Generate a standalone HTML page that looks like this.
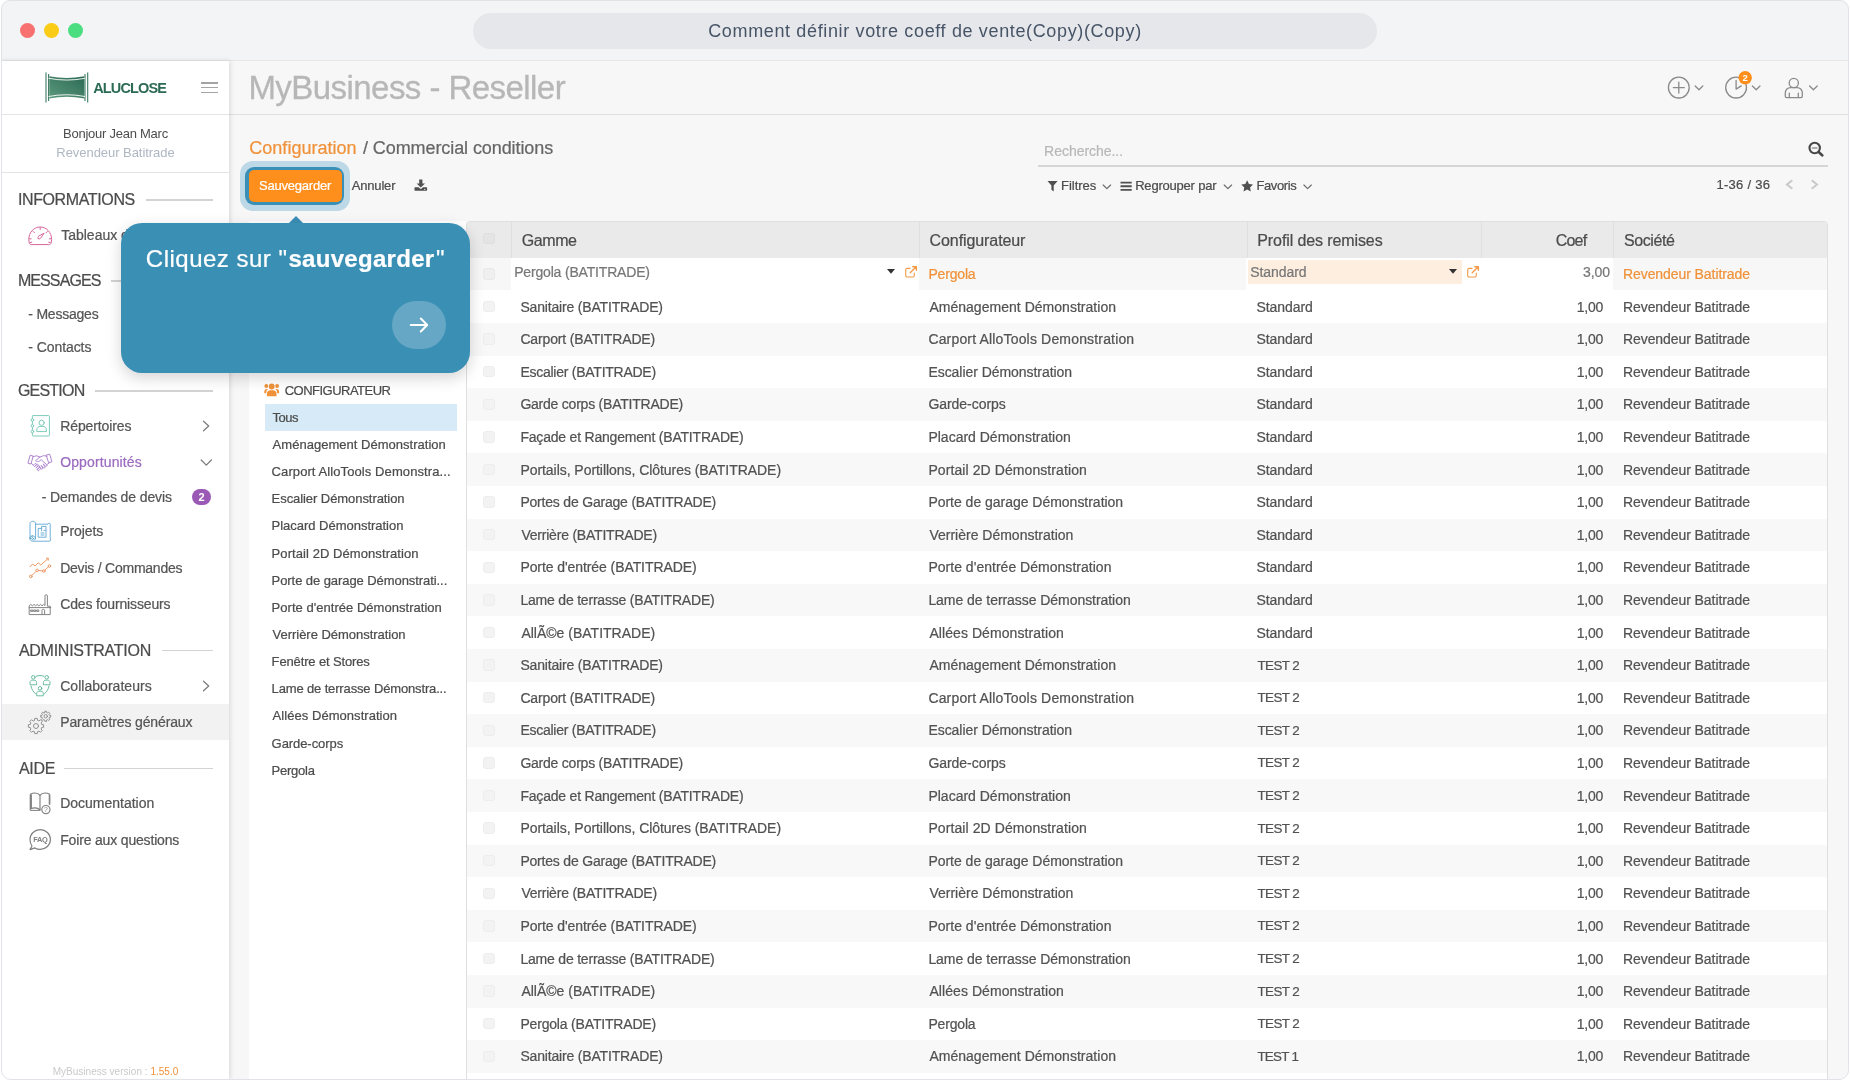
<!DOCTYPE html>
<html lang="fr">
<head>
<meta charset="utf-8">
<title>Comment définir votre coeff de vente(Copy)(Copy)</title>
<style>
*{box-sizing:border-box;margin:0;padding:0}
html,body{width:1850px;height:1080px;overflow:hidden;background:#fff;font-family:"Liberation Sans",sans-serif;color:#4c4c4c}
#win{position:absolute;left:0;top:0;width:1850px;height:1080px;overflow:hidden;background:#f7f7f7;will-change:transform}
#frame{position:absolute;left:1px;top:0;width:1848px;height:1080px;border:1px solid #e2e3e8;border-radius:9px 9px 10px 10px;box-shadow:0 0 0 12px #fff;z-index:50;pointer-events:none}
#tb{position:absolute;left:0;top:0;width:1850px;height:61px;background:#f3f4f6;border-bottom:1px solid #e5e7eb}
.tl{position:absolute;top:23px;width:15px;height:15px;border-radius:50%}
#pill{position:absolute;left:473px;top:13px;width:904px;height:36px;border-radius:18px;background:#e5e7eb;text-align:center;font-size:18px;line-height:36.600px;color:#475467;letter-spacing:.64px;white-space:nowrap}
/* sidebar */
#sb{position:absolute;left:0;top:61px;width:229px;height:1019px;background:#fff;box-shadow:1px 0 5px rgba(0,0,0,.13);z-index:3}
#sbh{position:absolute;left:0;top:0;width:229px;height:54px;border-bottom:1px solid #e4e4e4}
#usr{position:absolute;left:0;top:54px;width:229px;height:58px;border-bottom:1px solid #e4e4e4;text-align:center;font-size:13px}
.sec{position:absolute;left:18px;font-size:16px;letter-spacing:-.35px;color:#4c4c4c;line-height:20px;white-space:nowrap}
.secl{position:absolute;height:1.500px;background:#d3d3d3}
.mi{position:absolute;left:60px;font-size:14px;line-height:20px;white-space:nowrap;color:#555;letter-spacing:-.12px}
.sub{position:absolute;font-size:14px;line-height:20px;white-space:nowrap;color:#555;letter-spacing:-.12px}
.ico{position:absolute;left:27px;width:26px;height:26px;overflow:visible}
.chev{position:absolute;overflow:visible}
/* main header */
#mh{position:absolute;left:229px;top:61px;width:1621px;height:54px;background:#f7f7f7;border-bottom:1px solid #e0e0e0}
#mh h1{position:absolute;left:21px;top:7px;font-size:32px;font-weight:400;color:#b1b1b1;line-height:40px;letter-spacing:-.12px;white-space:nowrap}
/* control panel */
#bc{position:absolute;left:249px;top:136px;font-size:18px;line-height:24px;white-space:nowrap;color:#666;letter-spacing:-.02px}
#bc b{font-weight:400;color:#f0923a}
#halo{position:absolute;left:240px;top:161px;width:110px;height:50px;border-radius:13px;background:#bdd8e6}
#ring{position:absolute;left:245px;top:166.5px;width:99px;height:38.5px;border-radius:9px;background:#3a8fb7}
#save{position:absolute;left:248.5px;top:170px;width:93px;height:31.5px;border-radius:5px;background:#ff8f1c;color:#fff;font-size:13px;line-height:31.5px;text-align:center;letter-spacing:-.2px}
#ann{position:absolute;left:351px;top:176px;font-size:13px;line-height:20px;color:#4c4c4c}
#srch{position:absolute;left:1038px;top:164.800px;width:790px;height:1.800px;background:#d6d6d6}
#srcht{position:absolute;left:1043px;top:141px;font-size:14px;line-height:20px;color:#b5b5b5}
.flt{position:absolute;top:176px;font-size:13px;line-height:20px;color:#4c4c4c;white-space:nowrap;letter-spacing:-.2px}
#pager{position:absolute;left:1716px;top:175px;font-size:13px;line-height:20px;color:#4c4c4c;white-space:nowrap;letter-spacing:.2px}
/* filter panel */
#fp{position:absolute;left:249px;top:221px;width:217px;height:860px;background:#fff}
#fpt{position:absolute;left:285px;top:380px;font-size:13px;line-height:20px;color:#4c4c4c;white-space:nowrap;letter-spacing:-.45px}
.fi{position:absolute;left:265px;width:192px;height:27px;padding-left:7px;font-size:13px;line-height:27px;color:#4c4c4c;white-space:nowrap;letter-spacing:-.1px}
.fi.on{background:#d4e9f6}
/* table */
#tbl{position:absolute;left:466px;top:221px;width:1362px;height:870px;background:#fff;border:1px solid #dfdfdf;border-radius:4px 4px 0 0;overflow:hidden}
#th{position:absolute;left:0;top:0;width:1362px;height:36px;background:#eaeaea}
.hc{position:absolute;top:0;height:36px;border-left:1px solid #dfdfdf}
.r{position:absolute;left:0;width:1362px;height:32.6px}
.r.g{background:#f8f8f8}
.c{position:absolute;top:0;height:32.58px;font-size:14px;line-height:32.58px;white-space:nowrap;color:#4c4c4c;letter-spacing:-.1px}
.cb{position:absolute;left:16px;width:11.5px;height:11.5px;border-radius:3px;background:#f3f3f3;border:1px solid #ededed}
.t{position:absolute;white-space:nowrap;line-height:20px;color:#525252;-webkit-text-stroke:.22px}
/* tooltip */
#tip{position:absolute;left:121px;top:223px;width:349px;height:149.5px;border-radius:21px;background:#3a8fb5;z-index:10;box-shadow:0 5px 15px rgba(0,0,0,.17)}
#tipa{position:absolute;left:289px;top:216px;width:0;height:0;border-left:7px solid transparent;border-right:7px solid transparent;border-bottom:7px solid #3a8fb5;z-index:10}
#tipt{position:absolute;left:24.5px;top:20px;font-size:24px;line-height:30px;color:#fff;white-space:nowrap;letter-spacing:1px}
#tipt b{letter-spacing:.33px}
#tipb{position:absolute;left:271px;top:78px;width:54px;height:48px;border-radius:24px;background:rgba(255,255,255,.22)}
</style>
</head>
<body>
<div id="win">

<div id="tb">
  <div class="tl" style="left:20px;background:#f87171"></div>
  <div class="tl" style="left:44px;background:#facc15"></div>
  <div class="tl" style="left:68px;background:#4ade80"></div>
  <div id="pill">Comment définir votre coeff de vente(Copy)(Copy)</div>
</div>
<div id="mh">
  <svg style="position:absolute;left:1436px;top:12px;overflow:visible" width="170" height="32" viewBox="1665 73 170 32" fill="none" stroke="#8a8a8a" stroke-width="1.3" stroke-linecap="round" stroke-linejoin="round">
    <circle cx="1678.8" cy="87.6" r="10.4"/>
    <path d="M1673.3 87.6h11M1678.8 82.1v11"/>
    <path d="M1695.2 86l3.8 3.8 3.8-3.8"/>
    <circle cx="1736.1" cy="87.6" r="10.4"/>
    <path d="M1736.1 80.5v8.6l5.2-3.2"/>
    <path d="M1752.4 86l3.8 3.8 3.8-3.8"/>
    <circle cx="1793.8" cy="83" r="4.6"/>
    <path d="M1785.3 96.2v-3.4c0-3 2.4-5.2 5.2-5.2h6.6c2.8 0 5.2 2.2 5.2 5.200v3.400c0 .8-.6 1.400-1.400 1.400h-14.200c-.8 0-1.400-.6-1.400-1.400zM1789.300 97.600v-4.500M1798.300 97.600v-4.500"/>
    <path d="M1809.600 86l3.800 3.800 3.800-3.800"/>
    <circle cx="1745.200" cy="77.800" r="6.700" fill="#ff8f1c" stroke="none"/>
    <text x="1745.200" y="81.200" font-family="Liberation Sans, sans-serif" font-size="9.500" font-weight="700" fill="#fff" stroke="none" text-anchor="middle">2</text>
  </svg>
</div>

<div id="sb">
  <div id="sbh">
    <svg style="position:absolute;left:44px;top:10px;overflow:visible" width="46" height="34" viewBox="44 71 46 34">
      <defs><linearGradient id="lg" x1="0" y1="1" x2="1" y2="0"><stop offset="0" stop-color="#5b9a7c"/><stop offset="1" stop-color="#2c6a55"/></linearGradient></defs>
      <path d="M49.300 76.300Q66.800 79.800 84.300 76.300V98.500Q66.800 95 49.300 98.500Z" fill="url(#lg)"/>
      <path d="M46 72.500v30M48.600 74v27M85 74v27M87.700 72.500v30" stroke="#3b7a62" stroke-width="1.100" fill="none"/>
      <path d="M48.600 78.300Q66.800 81.800 85 78.300M48.600 96.500Q66.800 93 85 96.500" stroke="#fff" stroke-width=".9" fill="none"/>
    </svg>
    <div style="position:absolute;left:93.200px;top:16.600px;font-size:14.500px;font-weight:700;line-height:20px;color:#2b6a55;letter-spacing:-.85px;white-space:nowrap">ALUCLOSE</div>
    <div style="position:absolute;left:201px;top:21px;width:16.500px;height:1.500px;background:#a4a4a4"></div>
    <div style="position:absolute;left:201px;top:25.800px;width:16.500px;height:1.500px;background:#a4a4a4"></div>
    <div style="position:absolute;left:201px;top:30.500px;width:16.500px;height:1.500px;background:#a4a4a4"></div>
  </div>
  <div id="usr">
    <div style="position:absolute;left:0;top:9px;width:231px;line-height:20px;color:#4c4c4c;letter-spacing:-.25px">Bonjour Jean Marc</div>
    <div style="position:absolute;left:0;top:28px;width:231px;line-height:20px;color:#aeb7c2;letter-spacing:-.05px">Revendeur Batitrade</div>
  </div>
</div>

<div id="sbi" style="position:absolute;left:0;top:0;z-index:4">
  <div class="secl" style="left:146px;top:199px;width:67px"></div>
  <div class="secl" style="left:111px;top:280.100px;width:102px"></div>
  <div class="secl" style="left:95px;top:390.100px;width:118px"></div>
  <div class="secl" style="left:162px;top:649.500px;width:51px"></div>
  <div class="secl" style="left:64px;top:767.500px;width:149px"></div>

  <div style="position:absolute;left:2px;top:704px;width:227px;height:36px;background:#f2f2f2"></div>
  <div style="position:absolute;left:192px;top:489px;width:19px;height:16px;border-radius:8px;background:#9b59b6;color:#fff;font-size:11px;font-weight:700;line-height:16px;text-align:center">2</div>

  <svg class="chev" style="left:200px;top:418px" width="14" height="16" viewBox="200 418 14 16" fill="none" stroke="#7a7a7a" stroke-width="1.200" stroke-linecap="round" stroke-linejoin="round"><path d="M203.500 421.200l5.200 4.800-5.200 4.800"/></svg>
  <svg class="chev" style="left:198px;top:455px" width="16" height="14" viewBox="198 455 16 14" fill="none" stroke="#7a7a7a" stroke-width="1.200" stroke-linecap="round" stroke-linejoin="round"><path d="M201.200 460l5.100 5.200 5.100-5.200"/></svg>
  <svg class="chev" style="left:200px;top:678px" width="14" height="16" viewBox="200 678 14 16" fill="none" stroke="#7a7a7a" stroke-width="1.200" stroke-linecap="round" stroke-linejoin="round"><path d="M203.500 681.200l5.200 4.800-5.200 4.800"/></svg>

  <!-- icons -->
  <!-- dashboard -->
  <svg class="ico" style="top:222px" viewBox="27 222 26 26" fill="none" stroke="#d6659b" stroke-width="1" stroke-linecap="round" stroke-linejoin="round">
    <path d="M31.500 244.600c-1.400 0-2.200-.9-2.400-2.200-.2-1-.3-2-.3-3 0-6.900 5.100-12.400 11.400-12.400s11.400 5.500 11.400 12.400c0 1-.1 2-.3 3-.2 1.300-1 2.200-2.400 2.200z"/>
    <path d="M40.200 227.500v2M31.200 238.800h-1.800M49.300 238.800h1.800M33.200 231.500l1.300 1.300M47.300 231.500l-1.300 1.300M31.800 242.200l-1.600.4M48.700 242.200l1.600.4"/>
    <path d="M38.300 238.600c-.7-.8-.5-2 .5-2.600l5.300-2.800-3.400 4.900c-.6.900-1.700 1.100-2.400.5z"/>
  </svg>
  <!-- repertoires -->
  <svg class="ico" style="top:413px" viewBox="27 413 26 26" fill="none" stroke="#7dcbb9" stroke-width="1" stroke-linecap="round" stroke-linejoin="round">
    <rect x="32.400" y="415.600" width="17" height="20.400" rx=".8"/>
    <circle cx="32.400" cy="420" r="1.300" fill="#fff"/><circle cx="32.400" cy="425.800" r="1.300" fill="#fff"/><circle cx="32.400" cy="431.600" r="1.300" fill="#fff"/>
    <circle cx="41.600" cy="422.800" r="2.600"/>
    <path d="M36.800 431.200v-1.400c0-2 1.500-3.400 3.400-3.400h2.800c1.900 0 3.400 1.400 3.400 3.400v1.400z"/>
  </svg>
  <!-- opportunites -->
  <svg class="ico" style="top:450px" viewBox="27 450 26 26" fill="none" stroke="#a779c9" stroke-width=".9" stroke-linecap="round" stroke-linejoin="round">
    <path d="M28 462.800l2.200-7.600 3 .9-2.200 7.600zM46.600 455l3-.9 2.400 7.600-3 .9z"/>
    <path d="M33 456.600l3.600-.8 3.400 1.200 3.400-1.300 3.600.4M31.400 463.400l2 1.800M49.400 462.800l-2.600 1.800"/>
    <path d="M40 457l-4.400 3.600c1.200 1.300 2.800 1.200 4 .3l1.600-1.200 5.600 5.100c.8.800-.4 2.100-1.300 1.300l-2.400-2.200 1.800 2.700c.6.900-.7 1.900-1.500 1.100l-2.200-2.300 1.500 2.500c.5.900-.9 1.700-1.600.9l-1.900-2.200"/>
    <path d="M33.400 465.200l1.500-1.500c.9-.8 2.100.4 1.300 1.300l-1.400 1.500M34.800 466.500l1.900-1.900c.9-.8 2.100.4 1.300 1.300l-1.800 1.900M36.200 467.800l1.900-1.900c.9-.8 2.100.4 1.300 1.300l-1.800 1.900M37.600 469.100l1.500-1.500c.9-.8 2.100.4 1.300 1.300l-1.400 1.500c-.9.900-2.200-.4-1.400-1.300z"/>
  </svg>
  <!-- projets -->
  <svg class="ico" style="top:518px" viewBox="27 518 26 26" fill="none" stroke="#5fa6d2" stroke-width=".9" stroke-linecap="round" stroke-linejoin="round">
    <path d="M30 538.800v-15c0-3.400 5.600-3.400 5.600 0v15"/>
    <path d="M35.600 524.200h12.400c0-1.300 2.200-1.300 2.200 0v14c.9.900.6 3-1 3h-16.400c-3.700 0-3.700-5.200 0-5.200 2.600 0 3.400 2.600 1.600 4.200"/>
    <circle cx="32.600" cy="538.600" r="1"/>
    <path d="M38.600 528.400h3v-2h4.400v10.800h-7.400zM41.600 528.400v2.400M41 533h3M41 535h3M44 530.400h1.200"/>
    <path d="M30 538.800c0-2 1.200-3 2.800-3"/>
  </svg>
  <!-- devis -->
  <svg class="ico" style="top:555px" viewBox="27 555 26 26" fill="none" stroke="#ea9560" stroke-width=".95" stroke-linecap="round" stroke-linejoin="round">
    <path d="M30 566.800l2.600-2.800 2.400 2 3.200-3.200 2.600 2.200 7.200-6.400M46.400 558.200l2 .1-.2 2"/>
    <circle cx="30.800" cy="576.400" r="1.300"/><circle cx="37.200" cy="570.400" r="1.300"/><circle cx="43.800" cy="571" r="1.300"/><circle cx="49.400" cy="566" r="1.300"/>
    <path d="M31.800 575.500l4.500-4.200M38.500 570.500l4 .4M44.800 570.100l3.600-3.200"/>
  </svg>
  <!-- cdes fournisseurs -->
  <svg class="ico" style="top:591px" viewBox="27 591 26 26" fill="none" stroke="#7d7d7d" stroke-width=".95" stroke-linecap="round" stroke-linejoin="round">
    <path d="M29.200 614.200v-8.400l1.600-1.400 1.600 1.400 1.600-1.400 1.600 1.400 1.600-1.400 1.600 1.400 1.600-1.400 1.600 1.400 1.600-1.400 1.400 1.200v-9.800c0-1.500 2.400-1.500 2.400 0v10.400h2.800v8zM29.200 607.600h21.600"/>
    <path d="M42 614.200v-4c0-1.200 2.600-1.200 2.600 0v4"/>
    <rect x="31" y="610" width="1.800" height="1.400"/><rect x="34" y="610" width="1.800" height="1.400"/><rect x="37" y="610" width="1.800" height="1.400"/>
  </svg>
  <!-- collaborateurs -->
  <svg class="ico" style="top:672px" viewBox="27 672 26 26" fill="none" stroke="#62b99b" stroke-width=".95" stroke-linecap="round" stroke-linejoin="round">
    <circle cx="33.300" cy="677.300" r="1.800"/><path d="M30 684.400v-1.800c0-1.500 1-2.400 2.300-2.400h2c1.300 0 2.300.9 2.300 2.400v1.800z"/>
    <circle cx="46.700" cy="677.300" r="1.800"/><path d="M43.400 684.400v-1.800c0-1.500 1-2.400 2.300-2.400h2c1.300 0 2.300.9 2.300 2.400v1.800z"/>
    <circle cx="40" cy="688.300" r="1.800"/><path d="M36.700 695.400v-1.800c0-1.500 1-2.400 2.300-2.400h2c1.300 0 2.300.9 2.300 2.400v1.800z"/>
    <path d="M36.200 676.200c2.400-.9 5.200-.9 7.600 0M31 686c.6 3.400 2.300 6 4.600 7.800M49 686c-.6 3.400-2.300 6-4.600 7.800"/>
  </svg>
  <!-- parametres -->
  <svg class="ico" style="top:709px" viewBox="27 709 26 26" fill="none" stroke="#8b8b8b" stroke-width=".95" stroke-linecap="round" stroke-linejoin="round">
    <path d="M34.49 720.30 L34.74 718.40 L37.26 718.40 L37.51 720.30 L38.96 720.90 L40.48 719.74 L42.26 721.52 L41.10 723.04 L41.70 724.49 L43.60 724.74 L43.60 727.26 L41.70 727.51 L41.10 728.96 L42.26 730.48 L40.48 732.26 L38.96 731.10 L37.51 731.70 L37.26 733.60 L34.74 733.60 L34.49 731.70 L33.04 731.10 L31.52 732.26 L29.74 730.48 L30.90 728.96 L30.30 727.51 L28.40 727.26 L28.40 724.74 L30.30 724.49 L30.90 723.04 L29.74 721.52 L31.52 719.74 L33.04 720.90Z"/><circle cx="36" cy="726" r="2.500"/>
    <path d="M44.73 712.63 L44.86 711.27 L46.54 711.27 L46.67 712.63 L47.61 713.01 L48.67 712.15 L49.85 713.33 L48.99 714.39 L49.37 715.33 L50.73 715.46 L50.73 717.14 L49.37 717.27 L48.99 718.21 L49.85 719.27 L48.67 720.45 L47.61 719.59 L46.67 719.97 L46.54 721.33 L44.86 721.33 L44.73 719.97 L43.79 719.59 L42.73 720.45 L41.55 719.27 L42.41 718.21 L42.03 717.27 L40.67 717.14 L40.67 715.46 L42.03 715.33 L42.41 714.39 L41.55 713.33 L42.73 712.15 L43.79 713.01Z" fill="#f2f2f2"/><circle cx="45.700" cy="716.300" r="1.700"/>
  </svg>
  <!-- documentation -->
  <svg class="ico" style="top:790px" viewBox="27 790 26 26" fill="none" stroke="#7f7f7f" stroke-width="1.150" stroke-linecap="round" stroke-linejoin="round">
    <path d="M40 795.400c-1.300-1.700-3-2.400-5-2.400-1.700 0-3.100.3-4.300 1v14.800c1.200-.6 2.600-.9 4.300-.9 2 0 3.700.7 5 2.100"/>
    <path d="M40 795.400c1.300-1.700 3-2.400 5-2.400 1.700 0 3.100.3 4.300 1v10.200M40 795.400v14.600"/>
    <path d="M30.200 795v15.400h9.200M31.400 808.600v-13.600M49.900 795v9.200" stroke-width="1"/>
    <circle cx="45.900" cy="809.600" r="4.100" fill="#fff"/>
    <text x="45.900" y="812.100" font-family="Liberation Sans, sans-serif" font-size="6.800" fill="#7f7f7f" stroke="none" text-anchor="middle">?</text>
  </svg>
  <!-- faq -->
  <svg class="ico" style="top:827px" viewBox="27 827 26 26" fill="none" stroke="#7f7f7f" stroke-width="1.150" stroke-linecap="round" stroke-linejoin="round">
    <path d="M40.200 829.600c5.600 0 10.200 4.400 10.200 9.900s-4.600 9.900-10.200 9.900c-2 0-3.800-.5-5.400-1.500l-4.800 1.700 2-3.600c-1.300-1.800-2-4-2-6.500 0-5.500 4.600-9.900 10.200-9.900z"/>
    <text x="40.300" y="842.200" font-family="Liberation Sans, sans-serif" font-size="7.400" font-weight="700" fill="#7f7f7f" stroke="none" text-anchor="middle" letter-spacing="-.35">FAQ</text>
  </svg>

<div class="t " style="left:17.90px;top:189.80px;font-size:16px;letter-spacing:-0.373px;color:#4c4c4c;">INFORMATIONS</div>
<div class="t " style="left:17.90px;top:271.00px;font-size:16px;letter-spacing:-0.900px;color:#4c4c4c;">MESSAGES</div>
<div class="t " style="left:17.90px;top:381.00px;font-size:16px;letter-spacing:-0.783px;color:#4c4c4c;">GESTION</div>
<div class="t " style="left:18.90px;top:640.50px;font-size:16px;letter-spacing:-0.262px;color:#4c4c4c;">ADMINISTRATION</div>
<div class="t " style="left:18.90px;top:758.50px;font-size:16px;letter-spacing:-0.267px;color:#4c4c4c;">AIDE</div>
<div class="t " style="left:61.20px;top:225.00px;font-size:14px;letter-spacing:0.000px;color:#555;">Tableaux de bord</div>
<div class="t " style="left:60.20px;top:415.50px;font-size:14px;letter-spacing:-0.100px;color:#555;">Répertoires</div>
<div class="t " style="left:60.20px;top:452.00px;font-size:14px;letter-spacing:0.127px;color:#9b6bc0;">Opportunités</div>
<div class="t " style="left:60.20px;top:521.40px;font-size:14px;letter-spacing:-0.083px;color:#555;">Projets</div>
<div class="t " style="left:60.20px;top:557.50px;font-size:14px;letter-spacing:-0.231px;color:#555;">Devis / Commandes</div>
<div class="t " style="left:60.20px;top:594.00px;font-size:14px;letter-spacing:-0.156px;color:#555;">Cdes fournisseurs</div>
<div class="t " style="left:60.20px;top:675.50px;font-size:14px;letter-spacing:0.031px;color:#555;">Collaborateurs</div>
<div class="t " style="left:60.20px;top:712.00px;font-size:14px;letter-spacing:-0.128px;color:#555;">Paramètres généraux</div>
<div class="t " style="left:60.20px;top:793.00px;font-size:14px;letter-spacing:-0.008px;color:#555;">Documentation</div>
<div class="t " style="left:60.20px;top:829.50px;font-size:14px;letter-spacing:-0.167px;color:#555;">Foire aux questions</div>
<div class="t " style="left:28.30px;top:304.00px;font-size:14px;letter-spacing:-0.222px;color:#555;">- Messages</div>
<div class="t " style="left:28.30px;top:336.50px;font-size:14px;letter-spacing:-0.078px;color:#555;">- Contacts</div>
<div class="t " style="left:41.70px;top:487.00px;font-size:14px;letter-spacing:-0.111px;color:#555;">- Demandes de devis</div>
<div class="t" style="left:0;top:1066px;width:231px;text-align:center;font-size:10px;line-height:12px;color:#cacaca;letter-spacing:.02px;-webkit-text-stroke:0">MyBusiness version : <span style="color:#f0923a">1.55.0</span></div>
</div>
<div class="t " style="left:248.40px;top:67.80px;font-size:33px;letter-spacing:-0.550px;line-height:40px;color:#b7b7b7;-webkit-text-stroke:.3px #b7b7b7;">MyBusiness - Reseller</div>
<div id="halo"></div><div id="ring"></div><div id="save"></div>
<svg style="position:absolute;left:414px;top:178px;overflow:visible" width="14" height="14" viewBox="414 178 14 14"><path d="M419.200 179.400h3.200v4h2.600l-4.200 4.200-4.200-4.200h2.600zM415 187.200h3.600l1.400 1.400c.5.500 1.100.5 1.600 0l1.400-1.400h3.600c.3 0 .5.200.5.500v2.500c0 .3-.2.500-.5.500h-11.600c-.3 0-.5-.2-.5-.5v-2.500c0-.3.200-.5.500-.5z" fill="#505050"/><circle cx="424.800" cy="189.400" r=".55" fill="#f6f6f6"/></svg>
<div id="srch"></div>
<svg style="position:absolute;left:1808px;top:141px;overflow:visible" width="16" height="16" viewBox="1808 141 16 16" fill="none" stroke="#484848" stroke-linecap="round"><circle cx="1814.700" cy="148" r="5.200" stroke-width="2.100"/><path d="M1818.700 152l3.700 3.500" stroke-width="2.500"/><path d="M1812.300 148h4.700" stroke-width="1.100" stroke="#666"/></svg>
<svg style="position:absolute;left:1047px;top:180px;overflow:visible" width="12" height="13" viewBox="1047 180 12 13"><path d="M1047.500 181h10.100l-3.900 4.600v6l-2.300-1.800v-4.200z" fill="#505050"/></svg>
<svg style="position:absolute;left:1120px;top:181px;overflow:visible" width="12" height="11" viewBox="1120 181 12 11"><path d="M1120.500 181.700h11.200v1.900h-11.200zM1120.500 185.300h11.200v1.900h-11.200zM1120.500 188.900h11.200v1.900h-11.200z" fill="#505050"/></svg>
<svg style="position:absolute;left:1241px;top:180px;overflow:visible" width="13" height="12" viewBox="1241 180 13 12"><path d="M1247.150 180.300l1.800 3.700 4.050.55-2.950 2.850.72 4-3.620-1.920-3.620 1.920.72-4-2.950-2.850 4.050-.55z" fill="#505050"/></svg>
<svg style="position:absolute;left:1100px;top:182px;overflow:visible" width="220" height="10" viewBox="1100 182 220 10" fill="none" stroke="#666" stroke-width="1.100" stroke-linecap="round" stroke-linejoin="round"><path d="M1103.200 185l3.700 3.600 3.700-3.600M1224.200 185l3.700 3.600 3.700-3.600M1303.900 185l3.700 3.600 3.700-3.600"/></svg>
<svg style="position:absolute;left:1782px;top:178px;overflow:visible" width="40" height="14" viewBox="1782 178 40 14" fill="none" stroke="#cacaca" stroke-width="2.100" stroke-linejoin="miter"><path d="M1792.300 180.200l-5.300 4.300 5.300 4.300M1811.700 180.200l5.300 4.300-5.300 4.300"/></svg>

<div id="fp"></div>
<svg style="position:absolute;left:264px;top:383px;overflow:visible" width="15" height="14" viewBox="264 383 15 14" fill="#f0923a"><circle cx="271.700" cy="386.500" r="2.900"/><path d="M266.900 396.300v-2.600c0-2 1.500-3.500 3.500-3.500h2.600c2 0 3.500 1.500 3.500 3.500v2.600z"/><circle cx="266.300" cy="386" r="1.900"/><circle cx="277.100" cy="386" r="1.900"/><path d="M264.300 393.200v-1.800c0-1.400 1-2.400 2.400-2.400h1.300c-1.100.9-1.700 2.200-1.700 3.700v.5zM279.100 393.200v-1.800c0-1.400-1-2.400-2.400-2.400h-1.300c1.100.9 1.700 2.200 1.700 3.700v.5z"/></svg>

<div class="t " style="left:249.30px;top:136.00px;font-size:18px;letter-spacing:0.017px;line-height:24px;color:#f0923a;">Configuration</div>
<div class="t " style="left:363.00px;top:136.00px;font-size:18px;letter-spacing:-0.086px;line-height:24px;color:#666;">/ Commercial conditions</div>
<div class="t " style="left:259.00px;top:176.40px;font-size:13px;letter-spacing:-0.210px;color:#fff;">Sauvegarder</div>
<div class="t " style="left:351.70px;top:176.40px;font-size:13px;letter-spacing:-0.167px;color:#4c4c4c;">Annuler</div>
<div class="t " style="left:1044.10px;top:141.00px;font-size:14px;letter-spacing:-0.036px;color:#b8b8b8;">Recherche...</div>
<div class="t " style="left:1061.10px;top:176.20px;font-size:13px;letter-spacing:-0.033px;color:#4c4c4c;">Filtres</div>
<div class="t " style="left:1135.20px;top:176.20px;font-size:13px;letter-spacing:-0.208px;color:#4c4c4c;">Regrouper par</div>
<div class="t " style="left:1256.50px;top:176.20px;font-size:13px;letter-spacing:-0.400px;color:#4c4c4c;">Favoris</div>
<div class="t " style="left:1716.40px;top:175.00px;font-size:13px;letter-spacing:0.275px;color:#4c4c4c;">1-36 / 36</div>
<div class="t " style="left:284.70px;top:380.60px;font-size:13px;letter-spacing:-0.517px;color:#4c4c4c;">CONFIGURATEUR</div>
<div style="position:absolute;left:265px;top:404px;width:192px;height:27px;background:#d6ebf7"></div>
<div class="t " style="left:272.60px;top:403.80px;font-size:13px;letter-spacing:-0.533px;line-height:27px;color:#4c4c4c;">Tous</div>
<div class="t " style="left:272.60px;top:430.95px;font-size:13px;letter-spacing:0.021px;line-height:27px;color:#4c4c4c;">Aménagement Démonstration</div>
<div class="t " style="left:271.60px;top:458.10px;font-size:13px;letter-spacing:0.090px;line-height:27px;color:#4c4c4c;">Carport AlloTools Demonstra...</div>
<div class="t " style="left:271.60px;top:485.25px;font-size:13px;letter-spacing:-0.067px;line-height:27px;color:#4c4c4c;">Escalier Démonstration</div>
<div class="t " style="left:271.60px;top:512.40px;font-size:13px;letter-spacing:-0.020px;line-height:27px;color:#4c4c4c;">Placard Démonstration</div>
<div class="t " style="left:271.60px;top:539.55px;font-size:13px;letter-spacing:0.074px;line-height:27px;color:#4c4c4c;">Portail 2D Démonstration</div>
<div class="t " style="left:271.60px;top:566.70px;font-size:13px;letter-spacing:-0.072px;line-height:27px;color:#4c4c4c;">Porte de garage Démonstrati...</div>
<div class="t " style="left:271.60px;top:593.85px;font-size:13px;letter-spacing:0.030px;line-height:27px;color:#4c4c4c;">Porte d'entrée Démonstration</div>
<div class="t " style="left:272.60px;top:621.00px;font-size:13px;letter-spacing:-0.033px;line-height:27px;color:#4c4c4c;">Verrière Démonstration</div>
<div class="t " style="left:271.60px;top:648.15px;font-size:13px;letter-spacing:-0.138px;line-height:27px;color:#4c4c4c;">Fenêtre et Stores</div>
<div class="t " style="left:271.60px;top:675.30px;font-size:13px;letter-spacing:-0.146px;line-height:27px;color:#4c4c4c;">Lame de terrasse Démonstra...</div>
<div class="t " style="left:272.60px;top:702.45px;font-size:13px;letter-spacing:0.047px;line-height:27px;color:#4c4c4c;">Allées Démonstration</div>
<div class="t " style="left:271.60px;top:729.60px;font-size:13px;letter-spacing:-0.070px;line-height:27px;color:#4c4c4c;">Garde-corps</div>
<div class="t " style="left:271.60px;top:756.75px;font-size:13px;letter-spacing:-0.250px;line-height:27px;color:#4c4c4c;">Pergola</div>
<div id="tbl">
<div id="th"><div class="cb" style="top:10.700px;background:#e4e4e4;border-color:#dedede"></div><div class="hc" style="left:44px;width:408px"></div><div class="hc" style="left:452px;width:328px"></div><div class="hc" style="left:780px;width:235px"></div><div class="hc" style="left:1014px;width:131.500px"></div><div class="hc" style="left:1146px;width:214px"></div></div>
<div class="t " style="left:54.80px;top:0.70px;font-size:16px;letter-spacing:-0.425px;line-height:36.4px;color:#4c4c4c;">Gamme</div>
<div class="t " style="left:462.60px;top:0.70px;font-size:16px;letter-spacing:-0.092px;line-height:36.4px;color:#4c4c4c;">Configurateur</div>
<div class="t " style="left:790.30px;top:0.70px;font-size:16px;letter-spacing:-0.106px;line-height:36.4px;color:#4c4c4c;">Profil des remises</div>
<div class="t " style="left:1088.70px;top:0.70px;font-size:16px;letter-spacing:-0.800px;line-height:36.4px;color:#4c4c4c;">Coef</div>
<div class="t " style="left:1157.00px;top:0.70px;font-size:16px;letter-spacing:-0.417px;line-height:36.4px;color:#4c4c4c;">Société</div>
<div class="r" style="top:35.80px;background:#f7f7f7"></div>
<div class="cb" style="top:46.10px;background:#efefef;border-color:#e9e9e9"></div>
<div style="position:absolute;left:44px;top:35.80px;width:408px;height:32.580px;background:#fff"></div>
<div class="t " style="left:47.20px;top:33.70px;font-size:14px;letter-spacing:-0.178px;line-height:32.58px;color:#777;">Pergola (BATITRADE)</div>
<svg style="position:absolute;left:420px;top:47.10px" width="8" height="5" viewBox="0 0 8 5"><path d="M0 0h8l-4 4.700z" fill="#333"/></svg>
<svg style="position:absolute;left:437.5px;top:43.80px;overflow:visible" width="13" height="12" viewBox="0 0 13 12" fill="none" stroke="#f29a48" stroke-width="1.100" stroke-linecap="round" stroke-linejoin="round"><path d="M9.300 7v2.600c0 .8-.6 1.400-1.400 1.400h-5.800c-.8 0-1.400-.6-1.400-1.400v-5.800c0-.8.600-1.400 1.400-1.400h3"/><path d="M5.200 6.800l6-6M7.800.7h3.600v3.600" stroke-width="1.350"/></svg>
<div class="t " style="left:461.40px;top:36.10px;font-size:14px;letter-spacing:-0.167px;line-height:32.58px;color:#f0923a;">Pergola</div>
<div style="position:absolute;left:779px;top:35.80px;width:367px;height:32.580px;background:#fff"></div>
<div style="position:absolute;left:781.400px;top:38.40px;width:213.200px;height:23.700px;background:#fdeee0"></div>
<div class="t " style="left:783.20px;top:33.70px;font-size:14px;letter-spacing:-0.057px;line-height:32.58px;color:#777;">Standard</div>
<svg style="position:absolute;left:981.7px;top:47.10px" width="8" height="5" viewBox="0 0 8 5"><path d="M0 0h8l-4 4.700z" fill="#333"/></svg>
<svg style="position:absolute;left:999.5px;top:43.80px;overflow:visible" width="13" height="12" viewBox="0 0 13 12" fill="none" stroke="#f29a48" stroke-width="1.100" stroke-linecap="round" stroke-linejoin="round"><path d="M9.300 7v2.600c0 .8-.6 1.400-1.400 1.400h-5.800c-.8 0-1.400-.6-1.400-1.400v-5.800c0-.8.600-1.400 1.400-1.400h3"/><path d="M5.200 6.800l6-6M7.800.7h3.600v3.600" stroke-width="1.350"/></svg>
<div class="t " style="left:1116.00px;top:33.70px;font-size:14px;letter-spacing:-0.067px;line-height:32.58px;color:#777;">3,00</div>
<div class="t " style="left:1156.00px;top:36.10px;font-size:14px;letter-spacing:-0.078px;line-height:32.58px;color:#f0923a;">Revendeur Batitrade</div>
<div class="cb" style="top:78.70px"></div>
<div class="t " style="left:53.40px;top:68.55px;font-size:14px;letter-spacing:-0.170px;line-height:32.58px;">Sanitaire (BATITRADE)</div>
<div class="t " style="left:462.40px;top:68.55px;font-size:14px;letter-spacing:0.025px;line-height:32.58px;">Aménagement Démonstration</div>
<div class="t " style="left:789.40px;top:68.55px;font-size:14px;letter-spacing:-0.057px;line-height:32.58px;">Standard</div>
<div class="t " style="left:1109.80px;top:68.55px;font-size:14px;letter-spacing:-0.267px;line-height:32.58px;">1,00</div>
<div class="t " style="left:1156.00px;top:68.55px;font-size:14px;letter-spacing:-0.078px;line-height:32.58px;">Revendeur Batitrade</div>
<div class="r g" style="top:101.00px"></div>
<div class="cb" style="top:111.30px"></div>
<div class="t " style="left:53.40px;top:101.15px;font-size:14px;letter-spacing:-0.144px;line-height:32.58px;">Carport (BATITRADE)</div>
<div class="t " style="left:461.40px;top:101.15px;font-size:14px;letter-spacing:0.167px;line-height:32.58px;">Carport AlloTools Demonstration</div>
<div class="t " style="left:789.40px;top:101.15px;font-size:14px;letter-spacing:-0.057px;line-height:32.58px;">Standard</div>
<div class="t " style="left:1109.80px;top:101.15px;font-size:14px;letter-spacing:-0.267px;line-height:32.58px;">1,00</div>
<div class="t " style="left:1156.00px;top:101.15px;font-size:14px;letter-spacing:-0.078px;line-height:32.58px;">Revendeur Batitrade</div>
<div class="cb" style="top:143.90px"></div>
<div class="t " style="left:53.40px;top:133.75px;font-size:14px;letter-spacing:-0.253px;line-height:32.58px;">Escalier (BATITRADE)</div>
<div class="t " style="left:461.40px;top:133.75px;font-size:14px;letter-spacing:-0.048px;line-height:32.58px;">Escalier Démonstration</div>
<div class="t " style="left:789.40px;top:133.75px;font-size:14px;letter-spacing:-0.057px;line-height:32.58px;">Standard</div>
<div class="t " style="left:1109.80px;top:133.75px;font-size:14px;letter-spacing:-0.267px;line-height:32.58px;">1,00</div>
<div class="t " style="left:1156.00px;top:133.75px;font-size:14px;letter-spacing:-0.078px;line-height:32.58px;">Revendeur Batitrade</div>
<div class="r g" style="top:166.20px"></div>
<div class="cb" style="top:176.50px"></div>
<div class="t " style="left:53.40px;top:166.35px;font-size:14px;letter-spacing:-0.227px;line-height:32.58px;">Garde corps (BATITRADE)</div>
<div class="t " style="left:461.40px;top:166.35px;font-size:14px;letter-spacing:-0.040px;line-height:32.58px;">Garde-corps</div>
<div class="t " style="left:789.40px;top:166.35px;font-size:14px;letter-spacing:-0.057px;line-height:32.58px;">Standard</div>
<div class="t " style="left:1109.80px;top:166.35px;font-size:14px;letter-spacing:-0.267px;line-height:32.58px;">1,00</div>
<div class="t " style="left:1156.00px;top:166.35px;font-size:14px;letter-spacing:-0.078px;line-height:32.58px;">Revendeur Batitrade</div>
<div class="cb" style="top:209.10px"></div>
<div class="t " style="left:53.40px;top:198.95px;font-size:14px;letter-spacing:-0.200px;line-height:32.58px;">Façade et Rangement (BATITRADE)</div>
<div class="t " style="left:461.40px;top:198.95px;font-size:14px;letter-spacing:0.000px;line-height:32.58px;">Placard Démonstration</div>
<div class="t " style="left:789.40px;top:198.95px;font-size:14px;letter-spacing:-0.057px;line-height:32.58px;">Standard</div>
<div class="t " style="left:1109.80px;top:198.95px;font-size:14px;letter-spacing:-0.267px;line-height:32.58px;">1,00</div>
<div class="t " style="left:1156.00px;top:198.95px;font-size:14px;letter-spacing:-0.078px;line-height:32.58px;">Revendeur Batitrade</div>
<div class="r g" style="top:231.40px"></div>
<div class="cb" style="top:241.70px"></div>
<div class="t " style="left:53.40px;top:231.55px;font-size:14px;letter-spacing:-0.049px;line-height:32.58px;">Portails, Portillons, Clôtures (BATITRADE)</div>
<div class="t " style="left:461.40px;top:231.55px;font-size:14px;letter-spacing:0.087px;line-height:32.58px;">Portail 2D Démonstration</div>
<div class="t " style="left:789.40px;top:231.55px;font-size:14px;letter-spacing:-0.057px;line-height:32.58px;">Standard</div>
<div class="t " style="left:1109.80px;top:231.55px;font-size:14px;letter-spacing:-0.267px;line-height:32.58px;">1,00</div>
<div class="t " style="left:1156.00px;top:231.55px;font-size:14px;letter-spacing:-0.078px;line-height:32.58px;">Revendeur Batitrade</div>
<div class="cb" style="top:274.30px"></div>
<div class="t " style="left:53.40px;top:264.15px;font-size:14px;letter-spacing:-0.200px;line-height:32.58px;">Portes de Garage (BATITRADE)</div>
<div class="t " style="left:461.40px;top:264.15px;font-size:14px;letter-spacing:-0.021px;line-height:32.58px;">Porte de garage Démonstration</div>
<div class="t " style="left:789.40px;top:264.15px;font-size:14px;letter-spacing:-0.057px;line-height:32.58px;">Standard</div>
<div class="t " style="left:1109.80px;top:264.15px;font-size:14px;letter-spacing:-0.267px;line-height:32.58px;">1,00</div>
<div class="t " style="left:1156.00px;top:264.15px;font-size:14px;letter-spacing:-0.078px;line-height:32.58px;">Revendeur Batitrade</div>
<div class="r g" style="top:296.60px"></div>
<div class="cb" style="top:306.90px"></div>
<div class="t " style="left:54.40px;top:296.75px;font-size:14px;letter-spacing:-0.211px;line-height:32.58px;">Verrière (BATITRADE)</div>
<div class="t " style="left:462.40px;top:296.75px;font-size:14px;letter-spacing:0.000px;line-height:32.58px;">Verrière Démonstration</div>
<div class="t " style="left:789.40px;top:296.75px;font-size:14px;letter-spacing:-0.057px;line-height:32.58px;">Standard</div>
<div class="t " style="left:1109.80px;top:296.75px;font-size:14px;letter-spacing:-0.267px;line-height:32.58px;">1,00</div>
<div class="t " style="left:1156.00px;top:296.75px;font-size:14px;letter-spacing:-0.078px;line-height:32.58px;">Revendeur Batitrade</div>
<div class="cb" style="top:339.50px"></div>
<div class="t " style="left:53.40px;top:329.35px;font-size:14px;letter-spacing:-0.080px;line-height:32.58px;">Porte d'entrée (BATITRADE)</div>
<div class="t " style="left:461.40px;top:329.35px;font-size:14px;letter-spacing:0.022px;line-height:32.58px;">Porte d'entrée Démonstration</div>
<div class="t " style="left:789.40px;top:329.35px;font-size:14px;letter-spacing:-0.057px;line-height:32.58px;">Standard</div>
<div class="t " style="left:1109.80px;top:329.35px;font-size:14px;letter-spacing:-0.267px;line-height:32.58px;">1,00</div>
<div class="t " style="left:1156.00px;top:329.35px;font-size:14px;letter-spacing:-0.078px;line-height:32.58px;">Revendeur Batitrade</div>
<div class="r g" style="top:361.80px"></div>
<div class="cb" style="top:372.10px"></div>
<div class="t " style="left:53.40px;top:361.95px;font-size:14px;letter-spacing:-0.200px;line-height:32.58px;">Lame de terrasse (BATITRADE)</div>
<div class="t " style="left:461.40px;top:361.95px;font-size:14px;letter-spacing:-0.055px;line-height:32.58px;">Lame de terrasse Démonstration</div>
<div class="t " style="left:789.40px;top:361.95px;font-size:14px;letter-spacing:-0.057px;line-height:32.58px;">Standard</div>
<div class="t " style="left:1109.80px;top:361.95px;font-size:14px;letter-spacing:-0.267px;line-height:32.58px;">1,00</div>
<div class="t " style="left:1156.00px;top:361.95px;font-size:14px;letter-spacing:-0.078px;line-height:32.58px;">Revendeur Batitrade</div>
<div class="cb" style="top:404.70px"></div>
<div class="t " style="left:54.40px;top:394.55px;font-size:14px;letter-spacing:0.000px;line-height:32.58px;">AllÃ©e (BATITRADE)</div>
<div class="t " style="left:462.40px;top:394.55px;font-size:14px;letter-spacing:0.074px;line-height:32.58px;">Allées Démonstration</div>
<div class="t " style="left:789.40px;top:394.55px;font-size:14px;letter-spacing:-0.057px;line-height:32.58px;">Standard</div>
<div class="t " style="left:1109.80px;top:394.55px;font-size:14px;letter-spacing:-0.267px;line-height:32.58px;">1,00</div>
<div class="t " style="left:1156.00px;top:394.55px;font-size:14px;letter-spacing:-0.078px;line-height:32.58px;">Revendeur Batitrade</div>
<div class="r g" style="top:427.00px"></div>
<div class="cb" style="top:437.30px"></div>
<div class="t " style="left:53.40px;top:427.15px;font-size:14px;letter-spacing:-0.170px;line-height:32.58px;">Sanitaire (BATITRADE)</div>
<div class="t " style="left:462.40px;top:427.15px;font-size:14px;letter-spacing:0.025px;line-height:32.58px;">Aménagement Démonstration</div>
<div class="t " style="left:790.40px;top:427.60px;font-size:13.4px;letter-spacing:-0.560px;line-height:32.58px;">TEST 2</div>
<div class="t " style="left:1109.80px;top:427.15px;font-size:14px;letter-spacing:-0.267px;line-height:32.58px;">1,00</div>
<div class="t " style="left:1156.00px;top:427.15px;font-size:14px;letter-spacing:-0.078px;line-height:32.58px;">Revendeur Batitrade</div>
<div class="cb" style="top:469.90px"></div>
<div class="t " style="left:53.40px;top:459.75px;font-size:14px;letter-spacing:-0.144px;line-height:32.58px;">Carport (BATITRADE)</div>
<div class="t " style="left:461.40px;top:459.75px;font-size:14px;letter-spacing:0.167px;line-height:32.58px;">Carport AlloTools Demonstration</div>
<div class="t " style="left:790.40px;top:460.20px;font-size:13.4px;letter-spacing:-0.560px;line-height:32.58px;">TEST 2</div>
<div class="t " style="left:1109.80px;top:459.75px;font-size:14px;letter-spacing:-0.267px;line-height:32.58px;">1,00</div>
<div class="t " style="left:1156.00px;top:459.75px;font-size:14px;letter-spacing:-0.078px;line-height:32.58px;">Revendeur Batitrade</div>
<div class="r g" style="top:492.20px"></div>
<div class="cb" style="top:502.50px"></div>
<div class="t " style="left:53.40px;top:492.35px;font-size:14px;letter-spacing:-0.253px;line-height:32.58px;">Escalier (BATITRADE)</div>
<div class="t " style="left:461.40px;top:492.35px;font-size:14px;letter-spacing:-0.048px;line-height:32.58px;">Escalier Démonstration</div>
<div class="t " style="left:790.40px;top:492.80px;font-size:13.4px;letter-spacing:-0.560px;line-height:32.58px;">TEST 2</div>
<div class="t " style="left:1109.80px;top:492.35px;font-size:14px;letter-spacing:-0.267px;line-height:32.58px;">1,00</div>
<div class="t " style="left:1156.00px;top:492.35px;font-size:14px;letter-spacing:-0.078px;line-height:32.58px;">Revendeur Batitrade</div>
<div class="cb" style="top:535.10px"></div>
<div class="t " style="left:53.40px;top:524.95px;font-size:14px;letter-spacing:-0.227px;line-height:32.58px;">Garde corps (BATITRADE)</div>
<div class="t " style="left:461.40px;top:524.95px;font-size:14px;letter-spacing:-0.040px;line-height:32.58px;">Garde-corps</div>
<div class="t " style="left:790.40px;top:525.40px;font-size:13.4px;letter-spacing:-0.560px;line-height:32.58px;">TEST 2</div>
<div class="t " style="left:1109.80px;top:524.95px;font-size:14px;letter-spacing:-0.267px;line-height:32.58px;">1,00</div>
<div class="t " style="left:1156.00px;top:524.95px;font-size:14px;letter-spacing:-0.078px;line-height:32.58px;">Revendeur Batitrade</div>
<div class="r g" style="top:557.40px"></div>
<div class="cb" style="top:567.70px"></div>
<div class="t " style="left:53.40px;top:557.55px;font-size:14px;letter-spacing:-0.200px;line-height:32.58px;">Façade et Rangement (BATITRADE)</div>
<div class="t " style="left:461.40px;top:557.55px;font-size:14px;letter-spacing:0.000px;line-height:32.58px;">Placard Démonstration</div>
<div class="t " style="left:790.40px;top:558.00px;font-size:13.4px;letter-spacing:-0.560px;line-height:32.58px;">TEST 2</div>
<div class="t " style="left:1109.80px;top:557.55px;font-size:14px;letter-spacing:-0.267px;line-height:32.58px;">1,00</div>
<div class="t " style="left:1156.00px;top:557.55px;font-size:14px;letter-spacing:-0.078px;line-height:32.58px;">Revendeur Batitrade</div>
<div class="cb" style="top:600.30px"></div>
<div class="t " style="left:53.40px;top:590.15px;font-size:14px;letter-spacing:-0.049px;line-height:32.58px;">Portails, Portillons, Clôtures (BATITRADE)</div>
<div class="t " style="left:461.40px;top:590.15px;font-size:14px;letter-spacing:0.087px;line-height:32.58px;">Portail 2D Démonstration</div>
<div class="t " style="left:790.40px;top:590.60px;font-size:13.4px;letter-spacing:-0.560px;line-height:32.58px;">TEST 2</div>
<div class="t " style="left:1109.80px;top:590.15px;font-size:14px;letter-spacing:-0.267px;line-height:32.58px;">1,00</div>
<div class="t " style="left:1156.00px;top:590.15px;font-size:14px;letter-spacing:-0.078px;line-height:32.58px;">Revendeur Batitrade</div>
<div class="r g" style="top:622.60px"></div>
<div class="cb" style="top:632.90px"></div>
<div class="t " style="left:53.40px;top:622.75px;font-size:14px;letter-spacing:-0.200px;line-height:32.58px;">Portes de Garage (BATITRADE)</div>
<div class="t " style="left:461.40px;top:622.75px;font-size:14px;letter-spacing:-0.021px;line-height:32.58px;">Porte de garage Démonstration</div>
<div class="t " style="left:790.40px;top:623.20px;font-size:13.4px;letter-spacing:-0.560px;line-height:32.58px;">TEST 2</div>
<div class="t " style="left:1109.80px;top:622.75px;font-size:14px;letter-spacing:-0.267px;line-height:32.58px;">1,00</div>
<div class="t " style="left:1156.00px;top:622.75px;font-size:14px;letter-spacing:-0.078px;line-height:32.58px;">Revendeur Batitrade</div>
<div class="cb" style="top:665.50px"></div>
<div class="t " style="left:54.40px;top:655.35px;font-size:14px;letter-spacing:-0.211px;line-height:32.58px;">Verrière (BATITRADE)</div>
<div class="t " style="left:462.40px;top:655.35px;font-size:14px;letter-spacing:0.000px;line-height:32.58px;">Verrière Démonstration</div>
<div class="t " style="left:790.40px;top:655.80px;font-size:13.4px;letter-spacing:-0.560px;line-height:32.58px;">TEST 2</div>
<div class="t " style="left:1109.80px;top:655.35px;font-size:14px;letter-spacing:-0.267px;line-height:32.58px;">1,00</div>
<div class="t " style="left:1156.00px;top:655.35px;font-size:14px;letter-spacing:-0.078px;line-height:32.58px;">Revendeur Batitrade</div>
<div class="r g" style="top:687.80px"></div>
<div class="cb" style="top:698.10px"></div>
<div class="t " style="left:53.40px;top:687.95px;font-size:14px;letter-spacing:-0.080px;line-height:32.58px;">Porte d'entrée (BATITRADE)</div>
<div class="t " style="left:461.40px;top:687.95px;font-size:14px;letter-spacing:0.022px;line-height:32.58px;">Porte d'entrée Démonstration</div>
<div class="t " style="left:790.40px;top:688.40px;font-size:13.4px;letter-spacing:-0.560px;line-height:32.58px;">TEST 2</div>
<div class="t " style="left:1109.80px;top:687.95px;font-size:14px;letter-spacing:-0.267px;line-height:32.58px;">1,00</div>
<div class="t " style="left:1156.00px;top:687.95px;font-size:14px;letter-spacing:-0.078px;line-height:32.58px;">Revendeur Batitrade</div>
<div class="cb" style="top:730.70px"></div>
<div class="t " style="left:53.40px;top:720.55px;font-size:14px;letter-spacing:-0.200px;line-height:32.58px;">Lame de terrasse (BATITRADE)</div>
<div class="t " style="left:461.40px;top:720.55px;font-size:14px;letter-spacing:-0.055px;line-height:32.58px;">Lame de terrasse Démonstration</div>
<div class="t " style="left:790.40px;top:721.00px;font-size:13.4px;letter-spacing:-0.560px;line-height:32.58px;">TEST 2</div>
<div class="t " style="left:1109.80px;top:720.55px;font-size:14px;letter-spacing:-0.267px;line-height:32.58px;">1,00</div>
<div class="t " style="left:1156.00px;top:720.55px;font-size:14px;letter-spacing:-0.078px;line-height:32.58px;">Revendeur Batitrade</div>
<div class="r g" style="top:753.00px"></div>
<div class="cb" style="top:763.30px"></div>
<div class="t " style="left:54.40px;top:753.15px;font-size:14px;letter-spacing:0.000px;line-height:32.58px;">AllÃ©e (BATITRADE)</div>
<div class="t " style="left:462.40px;top:753.15px;font-size:14px;letter-spacing:0.074px;line-height:32.58px;">Allées Démonstration</div>
<div class="t " style="left:790.40px;top:753.60px;font-size:13.4px;letter-spacing:-0.560px;line-height:32.58px;">TEST 2</div>
<div class="t " style="left:1109.80px;top:753.15px;font-size:14px;letter-spacing:-0.267px;line-height:32.58px;">1,00</div>
<div class="t " style="left:1156.00px;top:753.15px;font-size:14px;letter-spacing:-0.078px;line-height:32.58px;">Revendeur Batitrade</div>
<div class="cb" style="top:795.90px"></div>
<div class="t " style="left:53.40px;top:785.75px;font-size:14px;letter-spacing:-0.178px;line-height:32.58px;">Pergola (BATITRADE)</div>
<div class="t " style="left:461.40px;top:785.75px;font-size:14px;letter-spacing:-0.167px;line-height:32.58px;">Pergola</div>
<div class="t " style="left:790.40px;top:786.20px;font-size:13.4px;letter-spacing:-0.560px;line-height:32.58px;">TEST 2</div>
<div class="t " style="left:1109.80px;top:785.75px;font-size:14px;letter-spacing:-0.267px;line-height:32.58px;">1,00</div>
<div class="t " style="left:1156.00px;top:785.75px;font-size:14px;letter-spacing:-0.078px;line-height:32.58px;">Revendeur Batitrade</div>
<div class="r g" style="top:818.20px"></div>
<div class="cb" style="top:828.50px"></div>
<div class="t " style="left:53.40px;top:818.35px;font-size:14px;letter-spacing:-0.170px;line-height:32.58px;">Sanitaire (BATITRADE)</div>
<div class="t " style="left:462.40px;top:818.35px;font-size:14px;letter-spacing:0.025px;line-height:32.58px;">Aménagement Démonstration</div>
<div class="t " style="left:790.40px;top:818.80px;font-size:13.4px;letter-spacing:-0.700px;line-height:32.58px;">TEST 1</div>
<div class="t " style="left:1109.80px;top:818.35px;font-size:14px;letter-spacing:-0.267px;line-height:32.58px;">1,00</div>
<div class="t " style="left:1156.00px;top:818.35px;font-size:14px;letter-spacing:-0.078px;line-height:32.58px;">Revendeur Batitrade</div>
</div>
<div id="tipa"></div><div id="tip">
<div class="t " style="left:24.80px;top:20.60px;font-size:24px;letter-spacing:0.500px;line-height:30px;color:#fff;">Cliquez sur</div>
<div class="t " style="left:157.60px;top:20.60px;font-size:24px;letter-spacing:0.000px;line-height:30px;color:#fff;">"</div>
<div class="t " style="left:167.40px;top:20.60px;font-size:24px;letter-spacing:0.300px;font-weight:700;line-height:30px;color:#fff;">sauvegarder</div>
<div class="t " style="left:315.00px;top:20.60px;font-size:24px;letter-spacing:0.000px;line-height:30px;color:#fff;">"</div>
<div id="tipb"><svg style="position:absolute;left:16px;top:15px;overflow:visible" width="22" height="18" viewBox="0 0 22 18" fill="none" stroke="#fff" stroke-width="2.100" stroke-linecap="round" stroke-linejoin="round"><path d="M2.800 9h16M12.800 2.600L19.200 9l-6.400 6.400"/></svg></div></div>
<div id="frame"></div></div></body></html>
